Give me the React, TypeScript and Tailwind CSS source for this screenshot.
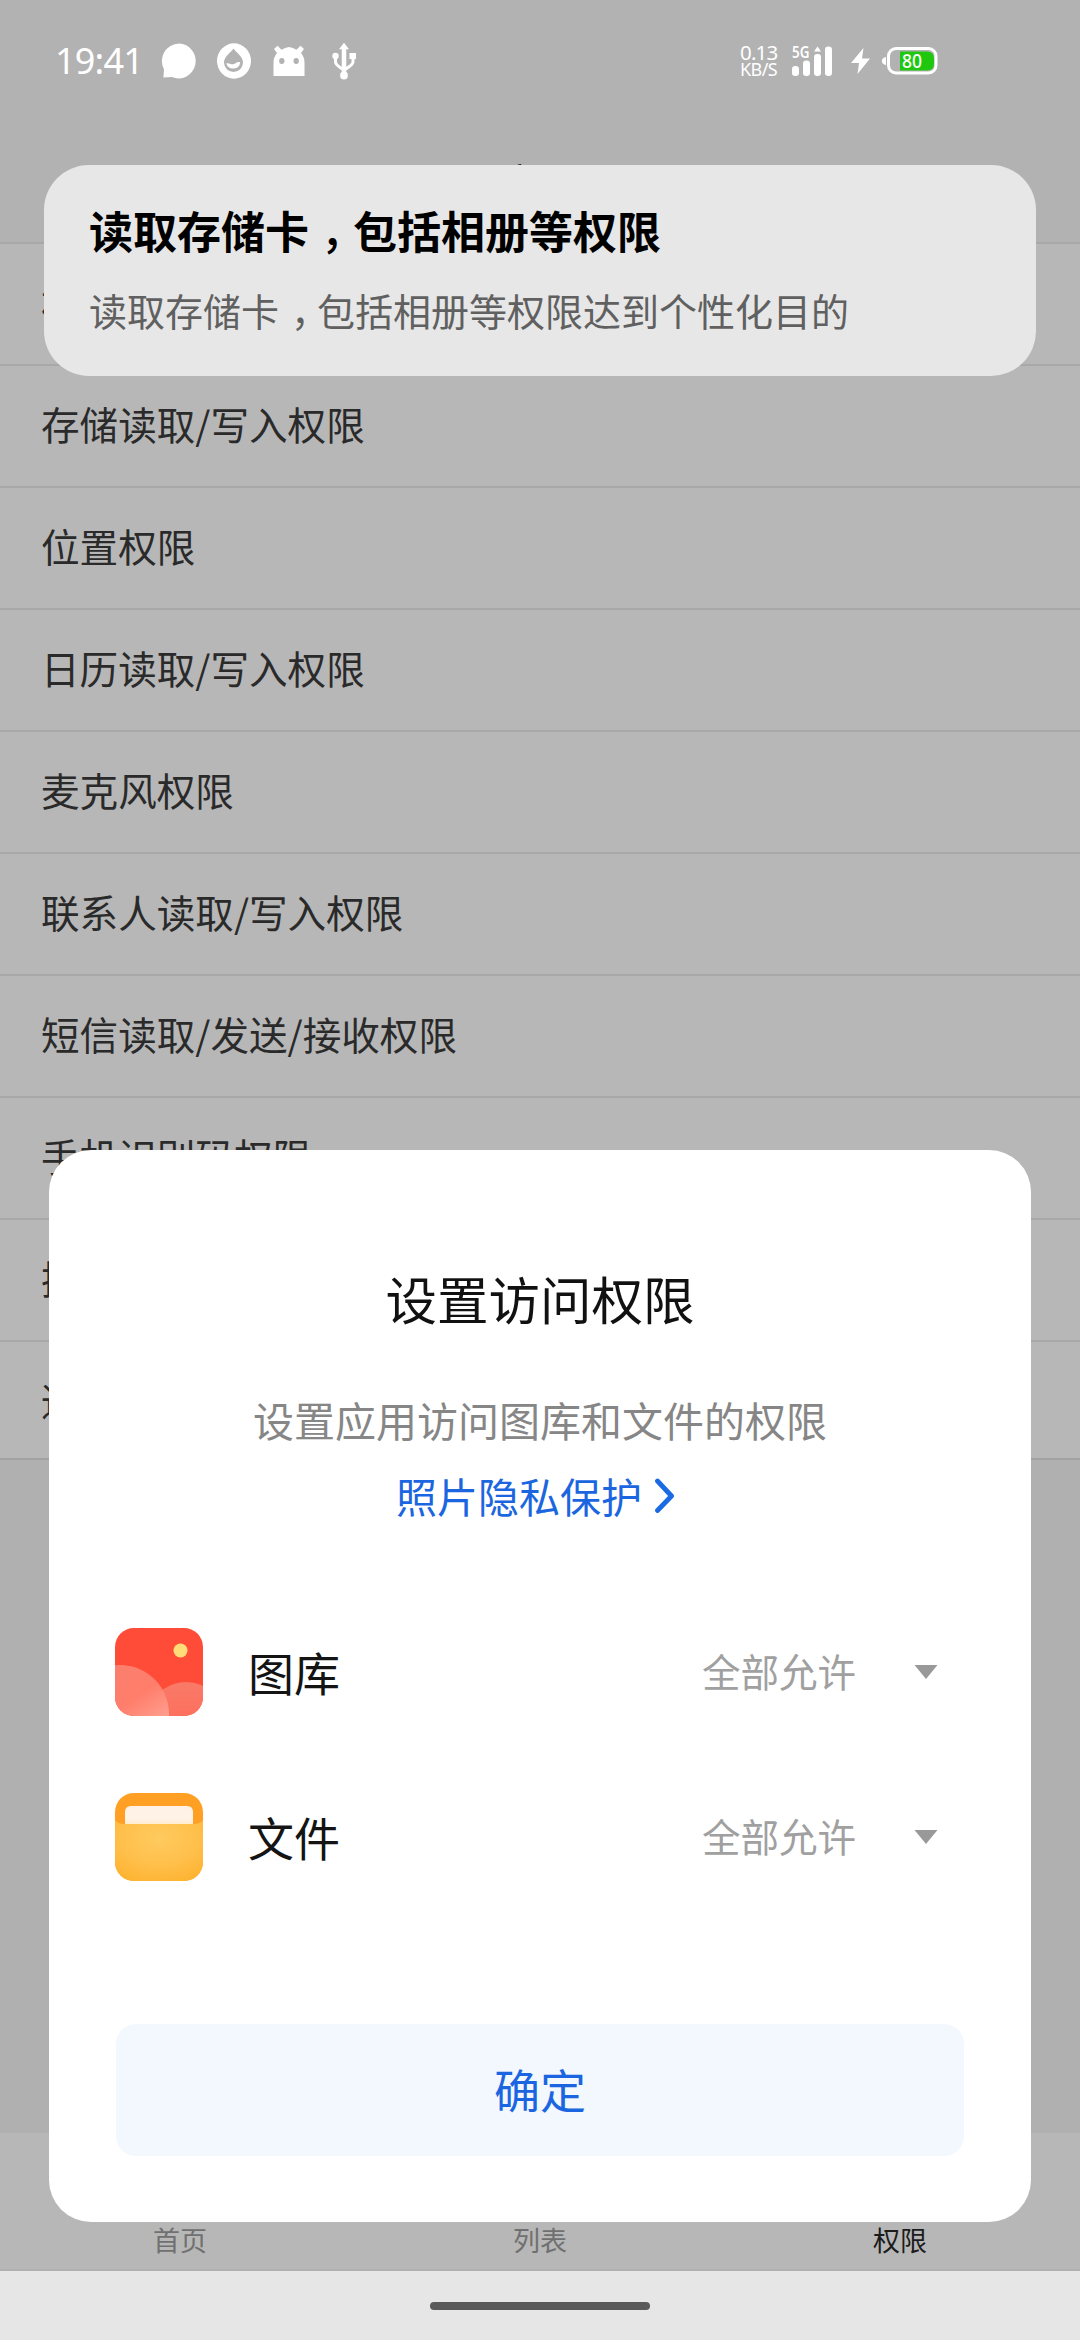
import { useState } from "react";

const permissionList = [
  "相机权限",
  "存储读取/写入权限",
  "位置权限",
  "日历读取/写入权限",
  "麦克风权限",
  "联系人读取/写入权限",
  "短信读取/发送/接收权限",
  "手机识别码权限",
  "拨打电话权限",
  "通知栏权限",
];

const tabs = ["首页", "列表", "权限"];

const StatusBar = () => {
  return (
    <div className="flex h-[121px] items-center pl-[55px] text-white font-['Noto_Sans',sans-serif]">
      <span className="w-[106px] text-[36px] leading-none tracking-[-0.8px]">
        19:41
      </span>
      <svg className="h-[36px] w-[36px]" viewBox="0 0 36 36" fill="#fff">
        <path d="M18 0.5a17 17.5 0 1 1-7 33.6l-8.6.3.6-8A17.5 17.5 0 0 1 18 .5z" />
      </svg>
      <svg className="ml-[19px] h-[36px] w-[36px]" viewBox="0 0 36 36">
        <ellipse cx="18" cy="18" rx="17" ry="17.7" fill="#fff" />
        <path
          d="M17.500 5.500C14.500 10 8 13.500 8 19.500a9.500 9.500 0 0 0 19 0c0-6-6.500-9.500-9.500-14z"
          fill="#b2b2b2"
        />
        <path
          d="M10.300 20.500c2.500-1.200 4.200 1.300 7 .8 2.800-.5 3-3 7-2a7.200 7.200 0 0 1-14 1.200z"
          fill="#fff"
        />
      </svg>
      <svg className="ml-[20px] h-[32px] w-[34px]" viewBox="0 0 34 32">
        <path
          d="M1.500 31V18A15.500 15 0 0 1 5 8L2 4 5.500 .8l4 4A16 16 0 0 1 17 2a16 16 0 0 1 7.500 2.800l4-4L32 4 29 8A15.500 15 0 0 1 32.500 18v13z"
          fill="#fff"
        />
        <ellipse cx="9.800" cy="16" rx="2.700" ry="3" fill="#b2b2b2" />
        <ellipse cx="24.200" cy="16" rx="2.700" ry="3" fill="#b2b2b2" />
      </svg>
      <svg
        className="ml-[25px] h-[38px] w-[26px]"
        viewBox="0 0 26 38"
        fill="none"
        stroke="#fff"
        strokeWidth="3"
      >
        <path d="M13 5v28" strokeWidth="4.500" />
        <path d="M4.500 14v6c0 3 4.500 5.500 8.500 8 4-2.500 9-5 9-8v-6" />
        <path d="M13 0.800l5 6.500H8z" fill="#fff" stroke="none" />
        <circle cx="4.500" cy="14" r="3.200" fill="#fff" stroke="none" />
        <path d="M18.500 11H25v6h-6.500z" fill="#fff" stroke="none" />
        <circle cx="13" cy="33.500" r="3.900" fill="#fff" stroke="none" />
      </svg>

      <div className="ml-[383px] flex w-[52px] flex-col whitespace-nowrap">
        <span className="text-[20.5px] leading-[17px] tracking-[-0.8px]">
          0.13
        </span>
        <span className="text-[18px] leading-[16px] tracking-[-0.6px]">
          KB/S
        </span>
      </div>
      <svg
        className="h-[34px] w-[42px] overflow-visible"
        viewBox="0 -2 42 34"
        fill="#fff"
      >
        <text
          x="0"
          y="11.500"
          fontSize="15.500"
          fontWeight="600"
          textLength="17.500"
          lengthAdjust="spacingAndGlyphs"
          fontFamily="Noto Sans, sans-serif"
        >
          5G
        </text>
        <rect x="0" y="20" width="7" height="10" rx="3.200" />
        <rect x="11" y="14.500" width="7" height="15.500" rx="3.200" />
        <rect x="22" y="8" width="7" height="22" rx="3.200" />
        <path d="M25.500 0.500l3.500 5h-7z" />
        <rect x="33" y="0.500" width="7" height="29.500" rx="3.200" />
      </svg>
      <svg className="ml-[17px] h-[28px] w-[20px]" viewBox="0 0 20 28">
        <path d="M12.500 1L0 16h8L6.500 27 19 11.500h-8z" fill="#fff" />
      </svg>
      <svg className="ml-[10px] h-[28px] w-[58px]" viewBox="0 0 58 28">
        <path d="M5 10v8c-5.500-.5-5.500-7.500 0-8z" fill="#fff" />
        <path d="M19 4.500h27q7 0 7 7v5q0 7-7 7H19z" fill="#1fc80f" />
        <rect
          x="7.500"
          y="1.500"
          width="47.500"
          height="24.500"
          rx="7.500"
          fill="none"
          stroke="#fff"
          strokeWidth="3"
        />
        <text
          x="21"
          y="20.500"
          fontSize="19"
          fontWeight="500"
          textLength="20"
          lengthAdjust="spacingAndGlyphs"
          fill="#fff"
          fontFamily="Noto Sans, sans-serif"
        >
          80
        </text>
      </svg>
    </div>
  );
};

const GalleryIcon = () => {
  return (
    <svg className="h-[88px] w-[88px] rounded-[19px]" viewBox="0 0 88 88">
      <defs>
        <linearGradient id="hillFront" x1="0.500" y1="0" x2="0.900" y2="0.600">
          <stop offset="0" stopColor="#fb7f6e" />
          <stop offset="0.500" stopColor="#ff7d6b" />
          <stop offset="1" stopColor="#ffa090" />
        </linearGradient>
        <linearGradient id="hillBack" x1="0" y1="0" x2="0" y2="1">
          <stop offset="0" stopColor="#f97a68" />
          <stop offset="0.600" stopColor="#ff6c5a" />
          <stop offset="1" stopColor="#ff6c5a" />
        </linearGradient>
      </defs>
      <rect width="88" height="88" fill="#ff4c38" />
      <circle cx="65.500" cy="22.500" r="7" fill="#ffdc78" />
      <circle cx="71" cy="93" r="39" fill="url(#hillBack)" />
      <circle cx="5" cy="86" r="49" fill="url(#hillFront)" />
    </svg>
  );
};

const FilesIcon = () => {
  return (
    <svg className="h-[88px] w-[88px] rounded-[19px]" viewBox="0 0 88 88">
      <defs>
        <radialGradient id="folder" cx="0.500" cy="0.300" r="0.850">
          <stop offset="0" stopColor="#ffca5e" />
          <stop offset="0.500" stopColor="#ffc04c" />
          <stop offset="1" stopColor="#fdb02a" />
        </radialGradient>
        <linearGradient id="paper" x1="0" y1="0" x2="0" y2="1">
          <stop offset="0" stopColor="#fff1e6" />
          <stop offset="0.700" stopColor="#fff3e8" />
          <stop offset="1" stopColor="#ffecd0" />
        </linearGradient>
      </defs>
      <rect width="88" height="88" fill="#ffa024" />
      <path d="M0 27q3 4 9 4h70q6 0 9-4v61H0z" fill="url(#folder)" />
      <path d="M10 31V19q0-6 6-6h56q6 0 6 6v12z" fill="url(#paper)" />
    </svg>
  );
};

const accessItems = [
  { label: "图库", icon: <GalleryIcon /> },
  { label: "文件", icon: <FilesIcon /> },
];

const PermissionToast = () => {
  return (
    <div className="absolute left-[44px] top-[165px] flex h-[211px] w-[992px] flex-col rounded-[45px] bg-[#e7e7e7] pl-[45px] pt-[35px]">
      <h2 className="text-[44px]/[60px] font-bold text-black">
        读取存储卡<span className="ml-3 -mr-3 font-medium">，</span>
        包括相册等权限
      </h2>
      <p className="mt-[22px] text-[38px]/[56px] text-[#606060]">
        读取存储卡<span className="ml-3 -mr-3">，</span>
        包括相册等权限达到个性化目的
      </p>
    </div>
  );
};

const AccessDialog = ({ onConfirm }: { onConfirm: () => void }) => {
  return (
    <div className="absolute left-[49px] top-[1150px] flex h-[1072px] w-[982px] flex-col items-center rounded-[42px] bg-white pt-[112px]">
      <h2 className="text-[51.5px]/[72px] text-[#111]">设置访问权限</h2>
      <p className="mt-[57px] text-[41px]/[56px] text-[#868686]">
        设置应用访问图库和文件的权限
      </p>
      <a className="mr-[7px] mt-[20px] flex items-center text-[41px]/[56px] text-[#1b66e0]">
        照片隐私保护
        <svg
          className="ml-[11px] h-[36px] w-[24px]"
          viewBox="0 0 24 36"
          fill="none"
          stroke="#1b6ae4"
          strokeWidth="4.800"
          strokeLinecap="round"
          strokeLinejoin="round"
        >
          <path d="M4.500 4L18.500 19 4.500 33.500" />
        </svg>
      </a>

      <div className="mt-[105px] flex w-full flex-col gap-[77px] pl-[66px] pr-[93px]">
        {accessItems.map((item) => (
          <div key={item.label} className="flex h-[88px] items-center">
            {item.icon}
            <span className="ml-[45px] pb-0.5 text-[46px]/[64px] text-[#141414]">
              {item.label}
            </span>
            <span className="ml-auto pb-1 text-[38.5px]/[56px] text-[#a0a0a0]">
              全部允许
            </span>
            <svg className="ml-[58px] h-[14px] w-[24px]" viewBox="0 0 24 14">
              <path d="M0.500 0h23L12 14z" fill="#999" />
            </svg>
          </div>
        ))}
      </div>

      <button
        onClick={onConfirm}
        className="mt-[143px] h-[132px] w-[848px] rounded-[20px] bg-[#f2f8fe] pb-1 text-[46px] text-[#1b66e0]"
      >
        确定
      </button>
    </div>
  );
};

const App = () => {
  const [showDialog, setShowDialog] = useState(true);
  const [activeTab, setActiveTab] = useState("权限");

  return (
    <div className="relative flex h-[2340px] w-[1080px] flex-col overflow-hidden bg-[#b0b0b0] font-['Noto_Sans_CJK_SC',sans-serif]">
      <header className="h-[242px] shrink-0 bg-[#b2b2b2]">
        <StatusBar />
        <h1 className="pt-[29px] text-center text-[42px]/[64px] text-[#111]">
          应用
        </h1>
      </header>

      <ul className="h-[1218px] shrink-0 overflow-hidden border-b-2 border-[#a2a2a2] bg-[#b7b7b7]">
        {permissionList.map((item) => (
          <li
            key={item}
            className="flex h-[122px] items-center border-t-2 border-[#a8a8a8] pb-1 pl-[41px] text-[38.6px] text-[#2a2a2a]"
          >
            {item}
          </li>
        ))}
      </ul>

      <nav className="mt-auto grid h-[138px] shrink-0 grid-cols-3 border-b-2 border-[#b0b0b0] bg-[#b7b7b7]">
        {tabs.map((tab) => (
          <button
            key={tab}
            onClick={() => setActiveTab(tab)}
            className={`flex items-end justify-center pb-[9px] text-[27px]/[40px] ${
              tab === activeTab ? "text-[#1c1c1c]" : "text-[#707070]"
            }`}
          >
            {tab}
          </button>
        ))}
      </nav>
      <div className="flex h-[69px] shrink-0 items-center justify-center bg-[#e6e6e6]">
        <div className="h-[8px] w-[220px] rounded-full bg-[#5a5a5a]" />
      </div>

      <PermissionToast />
      {showDialog && <AccessDialog onConfirm={() => setShowDialog(false)} />}
    </div>
  );
};

export default App;
